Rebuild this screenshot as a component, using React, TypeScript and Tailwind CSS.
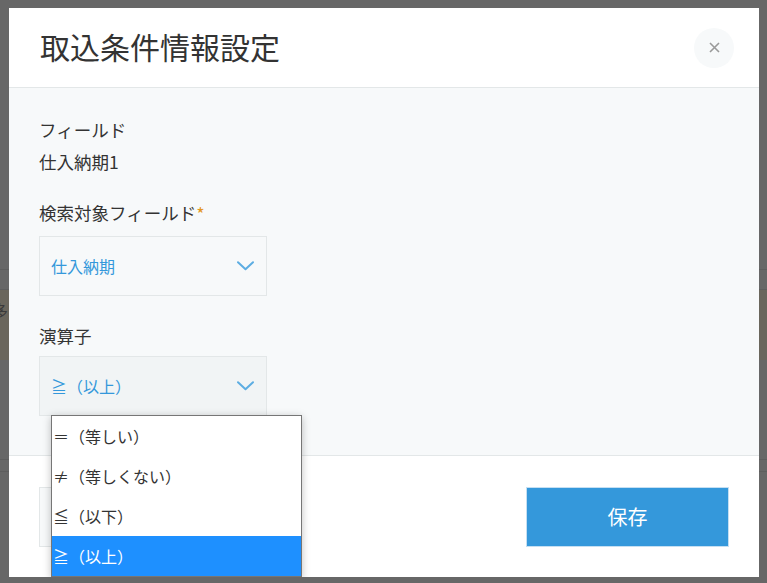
import React from "react";

const font = { fontFamily: '"Noto Sans CJK JP", "Noto Sans", sans-serif' };

function Chevron() {
  return (
    <svg width="17" height="10" viewBox="0 0 17 10" fill="none">
      <path d="M1 1.2 L8.5 8.2 L16 1.2" stroke="#5dade2" strokeWidth="2" strokeLinecap="round" strokeLinejoin="round" />
    </svg>
  );
}

function Select({ value, focused }: { value: string; focused?: boolean }) {
  return (
    <div
      className={
        "w-[228px] h-[60px] border border-[#e3e7e8] flex items-center justify-between pl-[11px] pr-[12px] " +
        (focused ? "bg-[#f1f4f5]" : "bg-[#f7f9fa]")
      }
    >
      <span className="text-[16px] leading-[24px] text-[#3498db]">{value}</span>
      <Chevron />
    </div>
  );
}

export default function App() {
  const options = ["＝（等しい）", "≠（等しくない）", "≦（以下）", "≧（以上）"];
  return (
    <div className="relative w-[767px] h-[583px] bg-[#676767] overflow-hidden" style={font}>
      {/* page behind overlay */}
      <div className="flex flex-col w-full">
        <div className="h-[270px] border-b border-[#5e5e5e]" />
        <div className="h-[20px] border-b border-[#5e5e5e]" />
        <div className="h-[70px] bg-[#6a665c] text-[16px] text-[#3a3a3a] leading-[24px] pt-[8px] -ml-[8px]">多</div>
        <div className="h-[100px] border-b border-[#5e5e5e]" />
        <div className="h-[12px] border-b border-[#5e5e5e]" />
      </div>

      {/* modal */}
      <div className="absolute left-[9px] top-[8px] w-[750px] h-[569px] bg-white flex flex-col overflow-hidden">
        <div className="h-[80px] shrink-0 border-b border-[#e3e7e8] flex items-center justify-between pl-[31px] pr-[25px]">
          <h1 className="text-[30px] leading-[40px] text-[#333] font-normal -mt-[4px]">取込条件情報設定</h1>
          <button className="w-[40px] h-[40px] rounded-full bg-[#f7f9fa] flex items-center justify-center">
            <svg width="11" height="11" viewBox="0 0 11 11">
              <path d="M1 1 L10 10 M10 1 L1 10" stroke="#9a9a9a" strokeWidth="1.6" />
            </svg>
          </button>
        </div>

        <div className="h-[368px] shrink-0 bg-[#f7f9fa] border-b border-[#e3e7e8] pl-[30px] pt-[30px] flex flex-col">
          <div className="text-[17.5px] leading-[24px] text-[#333]">フィールド</div>
          <div className="mt-[8px] text-[17.5px] leading-[24px] text-[#333]">仕入納期1</div>
          <div className="mt-[27px] text-[17.5px] leading-[24px] text-[#333]">
            検索対象フィールド<span className="text-[#e49722] text-[18px] align-top">*</span>
          </div>
          <div className="mt-[11px]">
            <Select value="仕入納期" />
          </div>
          <div className="mt-[28px] text-[17.5px] leading-[24px] text-[#333]">演算子</div>
          <div className="mt-[8px]">
            <Select value="≧（以上）" focused />
          </div>
        </div>

        <div className="flex-1 bg-white flex items-start justify-between pl-[30px] pr-[30px] pt-[31px]">
          <button className="w-[202px] h-[60px] border border-[#e3e7e8] bg-[#f7f9fa] text-[20px] text-[#3498db]">キャンセル</button>
          <button className="w-[203px] h-[60px] border border-[#c5dff2] bg-[#3498db] text-[20px] text-white">保存</button>
        </div>

        {/* native dropdown list */}
        <div className="absolute left-[42px] top-[407px] w-[251px] bg-white border border-[#767676] shadow-[0_2px_8px_rgba(0,0,0,0.25)] flex flex-col">
          {options.map((o, i) => (
            <div
              key={o}
              className={
                "h-[40px] pl-[1px] flex items-center text-[16px] leading-[24px] " +
                (i === 3 ? "bg-[#1e90ff] text-white" : "text-[#333]")
              }
            >
              {o}
            </div>
          ))}
        </div>
      </div>
    </div>
  );
}
